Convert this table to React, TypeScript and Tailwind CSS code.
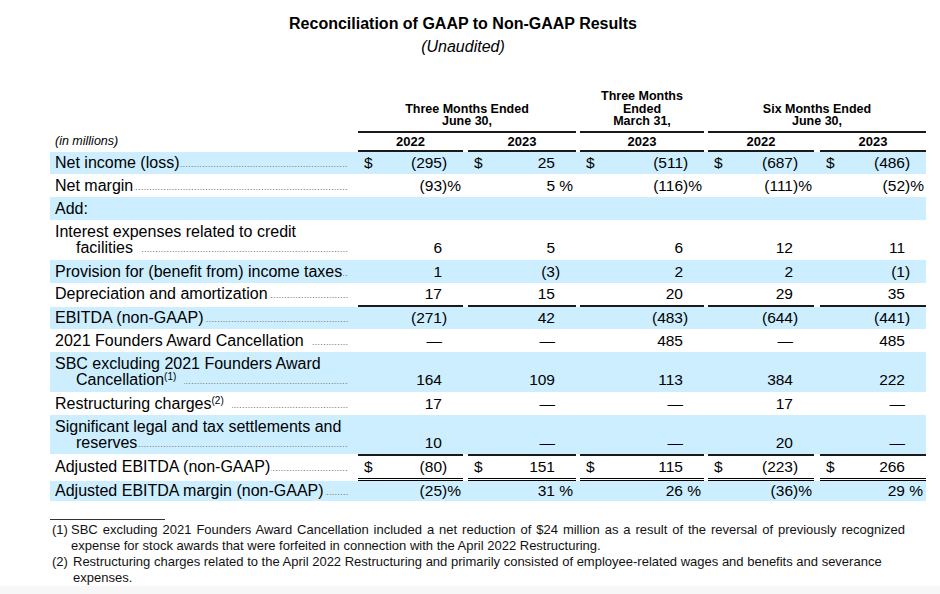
import type { ReactNode } from "react";

type Row = {
  label: ReactNode[];
  values?: string[];
  dollar?: boolean;
  blue?: boolean;
  dots?: boolean;
  gap?: boolean;
  h: string;
};

const COLS = [
  "w-[105px]",
  "ml-[5px] w-[108px]",
  "ml-[4px] w-[124px]",
  "ml-[4px] w-[106px]",
  "ml-[6px] w-[106px]",
];

const rows: (Row | "rule" | "double")[] = [
  {
    label: ["Net income (loss)"],
    values: ["(295)", "25", "(511)", "(687)", "(486)"],
    dollar: true,
    blue: true,
    h: "h-[22px]",
  },
  {
    label: ["Net margin"],
    values: ["(93)%", "5 %", "(116)%", "(111)%", "(52)%"],
    h: "h-[23px]",
  },
  { label: ["Add:"], blue: true, dots: false, h: "h-[23px]" },
  {
    label: ["Interest expenses related to credit", "facilities"],
    values: ["6", "5", "6", "12", "11"],
    gap: true,
    h: "h-[40px]",
  },
  {
    label: ["Provision for (benefit from) income taxes"],
    values: ["1", "(3)", "2", "2", "(1)"],
    blue: true,
    h: "h-[23px]",
  },
  {
    label: ["Depreciation and amortization"],
    values: ["17", "15", "20", "29", "35"],
    h: "h-[22px]",
  },
  "rule",
  {
    label: ["EBITDA (non-GAAP)"],
    values: ["(271)", "42", "(483)", "(644)", "(441)"],
    blue: true,
    h: "h-[22px]",
  },
  {
    label: ["2021 Founders Award Cancellation"],
    values: ["—", "—", "485", "—", "485"],
    gap: true,
    h: "h-[23px]",
  },
  {
    label: [
      "SBC excluding 2021 Founders Award",
      <>
        Cancellation<sup className="text-[10px]">(1)</sup>
      </>,
    ],
    values: ["164", "109", "113", "384", "222"],
    blue: true,
    gap: true,
    h: "h-[40px]",
  },
  {
    label: [
      <>
        Restructuring charges<sup className="text-[10px]">(2)</sup>
      </>,
    ],
    values: ["17", "—", "—", "17", "—"],
    gap: true,
    h: "h-[23px]",
  },
  {
    label: ["Significant legal and tax settlements and", "reserves"],
    values: ["10", "—", "—", "20", "—"],
    blue: true,
    h: "h-[39px]",
  },
  "rule",
  {
    label: ["Adjusted EBITDA (non-GAAP)"],
    values: ["(80)", "151", "115", "(223)", "266"],
    dollar: true,
    h: "h-[22px]",
  },
  "double",
  {
    label: ["Adjusted EBITDA margin (non-GAAP)"],
    values: ["(25)%", "31 %", "26 %", "(36)%", "29 %"],
    blue: true,
    h: "h-[20px]",
  },
];

function split(raw: string) {
  if (raw.endsWith(")%")) return [raw.slice(0, -2), ")%"];
  if (raw.endsWith(" %")) return [raw.slice(0, -2), "\u00a0%"];
  if (raw.endsWith(")")) return [raw.slice(0, -1), ")"];
  return [raw, ""];
}

// dot leader drawn as a repeating background, anchored to the right edge
function Dots() {
  return (
    <span className="ml-[1px] h-[3px] flex-1 bg-[radial-gradient(circle,#8c8c8c_0.6px,transparent_1px)] bg-[length:2.8px_3px] bg-right bg-repeat-x" />
  );
}

function Rule({ double }: { double?: boolean }) {
  return (
    <div className="flex">
      <div className="w-[308px] shrink-0" />
      {COLS.map((c, i) => (
        <div
          key={i}
          className={
            c +
            (double
              ? " h-[3px] border-y border-black"
              : " h-[2px] bg-[#1a1a1a]")
          }
        />
      ))}
    </div>
  );
}

function TableRow({ row }: { row: Row }) {
  const lines = row.label;
  const last = lines.length - 1;
  return (
    <div
      className={
        "flex items-center " + row.h + (row.blue ? " bg-[#cceeff]" : "")
      }
    >
      <div className="w-[308px] shrink-0 pl-[5px] pr-[10px] text-[16px] leading-[16px]">
        {lines.map((line, i) =>
          i < last ? (
            <div key={i}>{line}</div>
          ) : (
            <div
              key={i}
              className={"flex items-baseline" + (i > 0 ? " pl-[21px]" : "")}
            >
              <span className="whitespace-nowrap">{line}</span>
              {row.gap ? <span className="w-[7px]" /> : null}
              {row.dots !== false ? <Dots /> : null}
            </div>
          ),
        )}
      </div>
      {row.values
        ? row.values.map((raw, i) => {
            const [v, s] = split(raw);
            return (
              <div
                key={i}
                className={
                  COLS[i] +
                  " flex text-[15.5px] leading-[16px]" +
                  (lines.length > 1 ? " pt-[16px]" : "")
                }
              >
                {row.dollar ? <span className="pl-[6px]">$</span> : null}
                <span className="flex-1 text-right">{v}</span>
                <span className="w-[21px] shrink-0 whitespace-pre">{s}</span>
              </div>
            );
          })
        : null}
    </div>
  );
}

export default function App() {
  return (
    <div className="flex h-[594px] w-[940px] flex-col bg-white font-['Liberation_Sans',Arial,sans-serif] text-black">
      <div className="w-[926px] pt-[14px] text-center">
        <div className="text-[16px] font-bold leading-[20px]">
          Reconciliation of GAAP to Non-GAAP Results
        </div>
        <div className="mt-[3px] text-[16px] italic leading-[20px]">
          (Unaudited)
        </div>
      </div>

      <div className="ml-[50px] mt-[33px] w-[876px]">
        <div className="flex items-end pb-[3.5px] text-center text-[12.5px] font-bold leading-[12.5px]">
          <div className="w-[308px] shrink-0" />
          <div className="w-[218px]">
            Three Months Ended
            <br />
            June 30,
          </div>
          <div className="ml-[4px] w-[124px]">
            Three Months
            <br />
            Ended
            <br />
            March 31,
          </div>
          <div className="ml-[4px] w-[218px]">
            Six Months Ended
            <br />
            June 30,
          </div>
        </div>
        <div className="flex">
          <div className="w-[308px] shrink-0" />
          <div className="h-[2px] w-[218px] bg-[#1a1a1a]" />
          <div className="ml-[4px] h-[2px] w-[124px] bg-[#1a1a1a]" />
          <div className="ml-[4px] h-[2px] w-[218px] bg-[#1a1a1a]" />
        </div>
        <div className="flex h-[17px] items-center">
          <div className="w-[308px] shrink-0 pl-[5px] text-[12.5px] italic">
            (in millions)
          </div>
          {["2022", "2023", "2023", "2022", "2023"].map((y, i) => (
            <div
              key={i}
              className={COLS[i] + " text-center text-[13px] font-bold"}
            >
              {y}
            </div>
          ))}
        </div>
        <Rule />

        {rows.map((r, i) =>
          r === "rule" ? (
            <Rule key={i} />
          ) : r === "double" ? (
            <Rule key={i} double />
          ) : (
            <TableRow key={i} row={r} />
          ),
        )}

        <div className="mt-[18px] h-px w-[115px] bg-[#333]" />
        <div className="mt-[2px] text-[13px] leading-[16px] text-[#111]">
          <div className="flex">
            <span className="w-[21px] shrink-0 pl-[2px]">(1)</span>
            <p className="w-[834px] text-justify">
              SBC excluding 2021 Founders Award Cancellation included a net
              reduction of $24 million as a result of the reversal of
              previously recognized expense for stock awards that were
              forfeited in connection with the April 2022 Restructuring.
            </p>
          </div>
          <div className="flex">
            <span className="w-[23px] shrink-0 pl-[2px]">(2)</span>
            <p className="w-[832px]">
              Restructuring charges related to the April 2022 Restructuring
              and primarily consisted of employee-related wages and benefits
              and severance expenses.
            </p>
          </div>
        </div>
      </div>
      <div className="mt-auto h-[9px] bg-[#f7f7f7]" />
    </div>
  );
}
